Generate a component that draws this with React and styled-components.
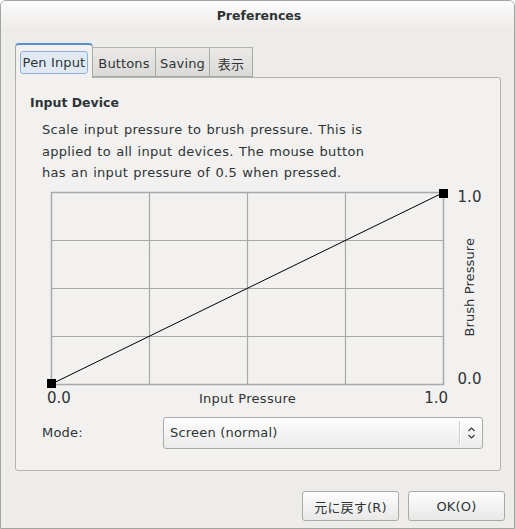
import React from "react";
import styled, { createGlobalStyle } from "styled-components";

const Global = createGlobalStyle`
  html, body { margin: 0; padding: 0; background: #ffffff; }
  body { font-family: "DejaVu Sans", "Noto Sans CJK JP", sans-serif; font-size: 13px; color: #2e3436; }
  * { box-sizing: border-box; }
`;

const Window = styled.div`
  width: 515px;
  height: 529px;
  border: 1px solid #a3a3a1;
  border-radius: 6px 6px 0 0;
  background: #edeceb;
  display: flex;
  flex-direction: column;
  overflow: hidden;
`;

const TitleBar = styled.div`
  height: 28px;
  flex: none;
  background: linear-gradient(#fcfcfc, #f3f2f1 60%, #edeceb);
  display: flex;
  align-items: center;
  justify-content: center;
  font-weight: bold;
  font-size: 12.5px;
  padding-top: 1px;
  padding-left: 3px;
`;

const Main = styled.div`
  padding: 14px 9px 0 14px;
  display: flex;
  flex-direction: column;
`;

const TabRow = styled.div`
  display: flex;
  align-items: flex-end;
  height: 34px;
  position: relative;
  z-index: 1;
`;

const Tab = styled.div`
  height: ${(p) => (p.$active ? "35px" : "30px")};
  margin-bottom: ${(p) => (p.$active ? "-1px" : "0")};
  padding: ${(p) => (p.$active ? "6px 4px 0" : "3px 4px 0")};
  display: flex;
  align-items: ${(p) => (p.$active ? "flex-start" : "center")};
  justify-content: center;
  border: 1px solid #a9a9a6;
  border-bottom: ${(p) => (p.$active ? "none" : "1px solid #a9a9a6")};
  border-left: ${(p) => (p.$active ? "1px solid #a9a9a6" : "none")};
  border-radius: ${(p) => (p.$active ? "4px 4px 0 0" : "0")};
  border-top: ${(p) => (p.$active ? "2px solid #5b8fcc" : "1px solid #b3b3b0")};
  background: ${(p) => (p.$active ? "#f2f1f0" : "linear-gradient(#ebeae9, #dad9d7)")};
  width: ${(p) => p.$w}px;
  color: #2e3436;
  font-size: 13px;
  letter-spacing: 0.15px;
  white-space: nowrap;
`;

const Focus = styled.div`
  width: 100%;
  height: 23px;
  border: 1px solid #8fb0d8;
  border-radius: 3px;
  background: #e1eaf4;
  display: flex;
  align-items: center;
  justify-content: center;
`;

const Panel = styled.div`
  width: 486px;
  height: 394px;
  border: 1px solid #b3b2af;
  border-radius: 0 3px 3px 3px;
  background: #f2f1f0;
  padding: 17px 15px 0 14px;
  display: flex;
  flex-direction: column;
`;

const Heading = styled.div`
  font-weight: bold;
  font-size: 12.5px;
  line-height: 16px;
`;

const Description = styled.p`
  margin: 8px 0 0 12px;
  font-size: 13px;
  line-height: 21.5px;
  letter-spacing: 0.3px;
  word-spacing: 0.8px;
  white-space: nowrap;
`;

const Chart = styled.div`
  margin: 3px 0 0 16px;
  display: grid;
  grid-template-columns: 402px auto;
  grid-template-rows: 202px 18px;
`;

const YAxis = styled.div`
  padding-left: 10px;
  display: flex;
  flex-direction: column;
  align-items: center;
  justify-content: space-between;
  width: 33px;
`;

const Tick = styled.span`
  font-size: 15px;
  line-height: 20px;
  display: block;
`;

const AxisTitle = styled.span`
  writing-mode: vertical-rl;
  transform: rotate(180deg);
  font-size: 13px;
  line-height: 16px;
  letter-spacing: 0.1px;
`;

const XAxis = styled.div`
  display: flex;
  justify-content: space-between;
  align-items: center;
  padding: 0 0 0 1px;
  line-height: 18px;
`;

const XTitle = styled.span`
  font-size: 13px;
  padding-top: 2px;
  letter-spacing: 0.28px;
`;

const ModeRow = styled.div`
  margin: 10px 0 0 12px;
  display: flex;
  align-items: center;
`;

const ModeLabel = styled.span`
  width: 121px;
  font-size: 13px;
  letter-spacing: 0.2px;
`;

const Combo = styled.div`
  width: 320px;
  height: 32px;
  border: 1px solid #a9a9a6;
  border-radius: 3px;
  background: linear-gradient(#fdfdfd, #ecebea);
  display: flex;
  align-items: center;
  padding-left: 6px;
`;

const ComboText = styled.span`
  flex: 1;
  font-size: 13px;
  letter-spacing: 0.2px;
`;

const ComboSep = styled.div`
  width: 1px;
  height: 24px;
  background: #cfcecc;
  box-shadow: 1px 0 0 #ffffff;
`;

const ComboArrow = styled.div`
  width: 22px;
  display: flex;
  align-items: center;
  justify-content: center;
`;

const ButtonRow = styled.div`
  margin-top: 20px;
  display: flex;
  justify-content: flex-end;
  gap: 9px;
`;

const Button = styled.div`
  width: 97px;
  height: 30px;
  border: 1px solid #a9a9a6;
  border-radius: 3px;
  background: linear-gradient(#fdfdfd, #e9e8e7);
  display: flex;
  align-items: center;
  justify-content: center;
  font-size: 13px;
  letter-spacing: 0.2px;
  color: #2e3436;
`;

function Curve() {
  const x0 = 5, y0 = 5, w = 392, h = 192;
  const cols = [1, 2, 3].map((i) => x0 + (w / 4) * i);
  const rows = [1, 2, 3].map((i) => y0 + (h / 4) * i);
  return (
    <svg width="402" height="202" viewBox="0 0 402 202">
      <rect x={x0 + 0.5} y={y0 + 0.5} width={w} height={h} fill="none" stroke="#a9a9a7" strokeWidth="1.5" />
      {cols.map((c) => (
        <line key={"c" + c} x1={c + 0.5} y1={y0} x2={c + 0.5} y2={y0 + h} stroke="#a9a9a7" strokeWidth="1.2" />
      ))}
      {rows.map((r) => (
        <line key={"r" + r} x1={x0} y1={r + 0.5} x2={x0 + w} y2={r + 0.5} stroke="#a9a9a7" strokeWidth="1.2" />
      ))}
      <line x1={x0 + 0.5} y1={y0 + h} x2={x0 + w + 0.5} y2={y0 + 0.5} stroke="#000" strokeWidth="1" />
      <rect x={x0 - 4} y={y0 + h - 5} width="9" height="9" fill="#000" />
      <rect x={x0 + w - 4} y={y0 - 3} width="9" height="9" fill="#000" />
    </svg>
  );
}

export default function App() {
  return (
    <>
      <Global />
      <Window>
        <TitleBar>Preferences</TitleBar>
        <Main>
          <TabRow>
            <Tab $active $w={78}>
              <Focus>Pen Input</Focus>
            </Tab>
            <Tab $w={63}>Buttons</Tab>
            <Tab $w={54}>Saving</Tab>
            <Tab $w={43}>表示</Tab>
          </TabRow>
          <Panel>
            <Heading>Input Device</Heading>
            <Description>
              Scale input pressure to brush pressure. This is
              <br />
              applied to all input devices. The mouse button
              <br />
              has an input pressure of 0.5 when pressed.
            </Description>
            <Chart>
              <Curve />
              <YAxis>
                <Tick>1.0</Tick>
                <AxisTitle>Brush Pressure</AxisTitle>
                <Tick>0.0</Tick>
              </YAxis>
              <XAxis>
                <Tick>0.0</Tick>
                <XTitle>Input Pressure</XTitle>
                <Tick>1.0</Tick>
              </XAxis>
            </Chart>
            <ModeRow>
              <ModeLabel>Mode:</ModeLabel>
              <Combo>
                <ComboText>Screen (normal)</ComboText>
                <ComboSep />
                <ComboArrow>
                  <svg width="9" height="14" viewBox="0 0 9 14">
                    <path d="M1.5 5 L4.5 2 L7.5 5" fill="none" stroke="#2e3436" strokeWidth="1.1" />
                    <path d="M1.5 9 L4.5 12 L7.5 9" fill="none" stroke="#2e3436" strokeWidth="1.1" />
                  </svg>
                </ComboArrow>
              </Combo>
            </ModeRow>
          </Panel>
          <ButtonRow>
            <Button>元に戻す(R)</Button>
            <Button>OK(O)</Button>
          </ButtonRow>
        </Main>
      </Window>
    </>
  );
}
